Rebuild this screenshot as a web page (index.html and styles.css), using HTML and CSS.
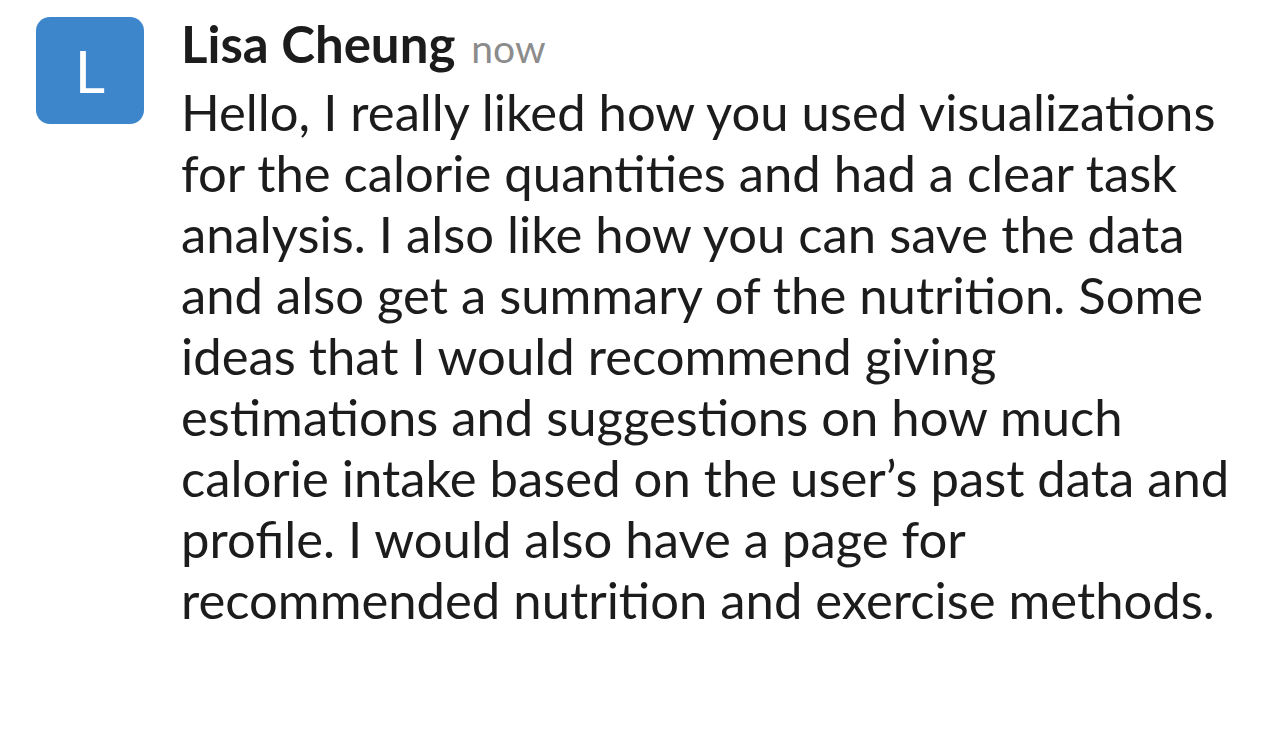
FILE: index.html
```html
<!DOCTYPE html>
<html>
<head>
<meta charset="utf-8">
<link rel="stylesheet" href="styles.css">
</head>
<body>
<div class="message">
  <div class="avatar">L</div>
  <div class="content">
    <div class="header"><span class="name">Lisa Cheung</span><span class="time">now</span></div>
    <div class="text">Hello, I really liked how you used visualizations for the calorie quantities and had a clear task analysis. I also like how you can save the data and also get a summary of the nutrition. Some ideas that I would recommend giving estimations and suggestions on how much calorie intake based on the user’s past data and profile. I would also have a page for recommended nutrition and exercise methods.</div>
  </div>
</div>
</body>
</html>
```

FILE: styles.css
```css
html, body {
  margin: 0;
  padding: 0;
  background: #ffffff;
}
body {
  font-family: Lato, "Noto Sans", sans-serif;
  color: #1d1c1d;
  width: 1284px;
  height: 737px;
  overflow: hidden;
}
.message {
  display: flex;
  padding: 17px 20px 0 36px;
  gap: 37px;
}
.avatar {
  flex: 0 0 108px;
  width: 108px;
  height: 107px;
  border-radius: 14px;
  background: #3d86cc;
  color: #ffffff;
  font-size: 59px;
  font-weight: 400;
  line-height: 1;
  display: flex;
  align-items: center;
  justify-content: center;
}
.content {
  flex: 1;
  min-width: 0;
}
.header {
  display: flex;
  align-items: baseline;
  gap: 16px;
  line-height: 60px;
  margin: -3px 0 3px;
}
.name {
  font-weight: 700;
  font-size: 51px;
}
.time {
  font-size: 39px;
  color: #8c8c8c;
}
.text {
  font-size: 50.8px;
  line-height: 61px;
  width: 1075px;
}
```
